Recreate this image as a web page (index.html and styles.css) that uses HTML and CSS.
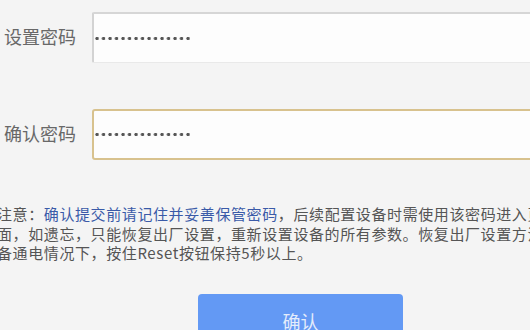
FILE: index.html
```html
<!DOCTYPE html>
<html lang="zh-CN">
<head>
<meta charset="utf-8">
<title>设置密码</title>
<link rel="stylesheet" href="styles.css">
</head>
<body>
<div class="page">
  <div class="row row-first">
    <div class="label">设置密码</div>
    <div class="field field-plain"><span class="dots"></span></div>
  </div>
  <div class="row row-second">
    <div class="label">确认密码</div>
    <div class="field field-focus"><span class="dots"></span></div>
  </div>
  <div class="notice">
    <div class="line">注意：<span class="hl">确认提交前请记住并妥善保管密码</span>，后续配置设备时需使用该密码进入页</div>
    <div class="line">面，如遗忘，只能恢复出厂设置，重新设置设备的所有参数。恢复出厂设置方法：在设</div>
    <div class="line">备通电情况下，按住Reset按钮保持5秒以上。</div>
  </div>
  <div class="actions">
    <button class="btn">确认</button>
  </div>
</div>
</body>
</html>
```
FILE: styles.css
```css
html, body {
  margin: 0;
  padding: 0;
  background: #f4f4f4;
  overflow: hidden;
}
.page {
  width: 530px;
  height: 330px;
  overflow: hidden;
  font-family: "Noto Sans CJK SC", "Noto Sans", sans-serif;
}
.row {
  display: flex;
  align-items: center;
}
.row-first {
  padding-top: 12px;
}
.row-second {
  margin-top: 46px;
}
.label {
  width: 88px;
  padding-left: 4px;
  font-size: 18px;
  line-height: 24px;
  color: #686868;
  margin-top: -3px;
}
.field {
  flex: 1;
  margin-right: -20px;
  height: 51px;
  box-sizing: border-box;
  background: #fdfdfd;
  display: flex;
  align-items: center;
  padding-left: 0;
}
.field-plain {
  border-top: 2px solid #d6d6d6;
  border-left: 2px solid #d3d3d3;
  border-bottom: 1px solid #e9e9e9;
  border-radius: 2px 0 0 2px;
}
.field-focus {
  border: 2px solid #d8c28e;
  border-radius: 3px 0 0 3px;
  height: 51px;
}
.dots {
  display: block;
  width: 97.5px;
  height: 5px;
  background-image: radial-gradient(circle at 3px 2.5px, #555555 1.4px, rgba(85,85,85,0) 2px);
  background-size: 6.5px 5px;
  background-repeat: repeat-x;
}
.notice {
  margin-top: 44px;
  margin-left: -3px;
  font-size: 15px;
  letter-spacing: 0.6px;
  line-height: 19.5px;
  color: #555555;
}
.line {
  white-space: nowrap;
}
.hl {
  color: #3a5aa8;
}
.actions {
  margin-top: 31px;
  padding-left: 198px;
}
.btn {
  display: block;
  width: 205px;
  height: 54px;
  border: 0;
  border-radius: 4px;
  background: #6399f4;
  color: #e4ecfb;
  font-family: "Noto Sans CJK SC", "Noto Sans", sans-serif;
  font-size: 18px;
  line-height: 54px;
  padding: 0;
}
```
